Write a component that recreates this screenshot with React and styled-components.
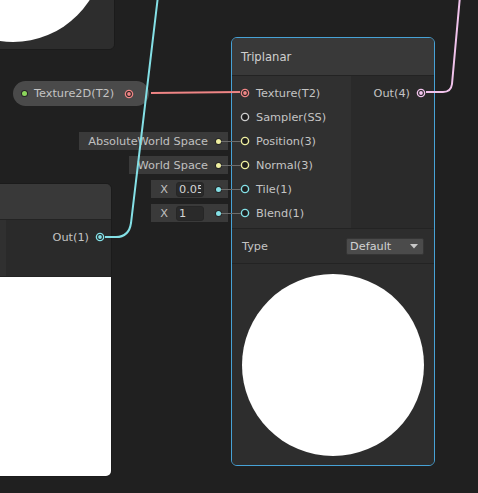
import React from 'react';
import styled, { createGlobalStyle } from 'styled-components';

const colors = {
	canvas: '#202020',
	nodeBody: '#2a2a2a',
	inputCol: '#303030',
	preview: '#2d2d2d',
	header: '#393939',
	divider: '#232323',
	selected: '#47a2d6',
	text: '#c4c4c4',
	texture: '#ef8585',
	vector1: '#84e0e6',
	vector3: '#efefa0',
	vector4: '#f1c3ec',
	sampler: '#cdcdcd',
	property: '#8cd65c',
	field: '#3a3a3a',
	pill: '#4a4a4a',
};

const GlobalStyle = createGlobalStyle`
	html, body {
		margin: 0;
		padding: 0;
		background: ${colors.canvas};
		overflow: hidden;
	}
	body {
		font-family: "DejaVu Sans", "Liberation Sans", sans-serif;
	}
`;

const Canvas = styled.div`
	position: relative;
	width: 478px;
	height: 493px;
	overflow: hidden;
	background: ${colors.canvas};
	font-family: "DejaVu Sans", "Liberation Sans", sans-serif;
	font-size: 11.3px;
	color: ${colors.text};
`;

// graph nodes sit on a free canvas, so their place is the content
const Node = styled.div`
	position: absolute;
	left: ${({ $x }) => $x}px;
	top: ${({ $y }) => $y}px;
	width: ${({ $w }) => $w}px;
	box-sizing: border-box;
	display: flex;
	flex-direction: column;
	background: ${colors.nodeBody};
	border: 1px solid ${({ $selected }) => ($selected ? colors.selected : '#1b1b1b')};
	border-radius: 6px;
`;

const NodeHeader = styled.div`
	height: ${({ $h }) => $h}px;
	display: flex;
	align-items: center;
	padding-left: 9px;
	background: ${colors.header};
	border-bottom: 1px solid ${colors.divider};
	border-radius: 5px 5px 0 0;
	font-size: 11.6px;
	color: #d0d0d0;
`;

const NodeBody = styled.div`
	display: flex;
	align-items: stretch;
	background: ${colors.nodeBody};
`;

const InputColumn = styled.div`
	width: ${({ $w }) => $w}px;
	min-height: ${({ $minH }) => $minH || 0}px;
	box-sizing: border-box;
	padding: 5px 0 3px;
	display: flex;
	flex-direction: column;
	background: ${colors.inputCol};
`;

const OutputColumn = styled.div`
	flex: 1;
	padding: 5px 0 3px;
	display: flex;
	flex-direction: column;
`;

const PortRow = styled.div`
	position: relative;
	height: 24px;
	display: flex;
	align-items: center;
	flex-direction: ${({ $out }) => ($out ? 'row-reverse' : 'row')};
	gap: 6px;
	padding: 0 ${({ $pad }) => $pad || 8}px;
	white-space: nowrap;
`;

const PortIcon = styled.svg`
	flex: none;
	display: block;
`;

const Port = ({ color, filled }) => (
	<PortIcon width="10" height="10" viewBox="0 0 10 10">
		<circle cx="5" cy="5" r="3.6" fill="#1e1e1e" stroke={color} strokeWidth="1.4" />
		{filled && <circle cx="5" cy="5" r="1.9" fill={color} />}
	</PortIcon>
);

const Dot = styled.span`
	flex: none;
	width: 5px;
	height: 5px;
	border-radius: 50%;
	background: ${({ $color }) => $color};
	box-shadow: 0 0 0 1px #262626;
`;

// inline value fields hang off the left side of an input port
const InlineField = styled.div`
	position: absolute;
	right: calc(100% + 4px);
	top: 3px;
	height: 18px;
	display: flex;
	align-items: center;
	gap: 8px;
	padding: 0 7px 0 9px;
	background: ${colors.field};
	color: #c0c0c0;
	white-space: nowrap;

	&::after {
		content: '';
		position: absolute;
		left: calc(100% - 7px);
		top: 9px;
		width: 20px;
		height: 1px;
		background: #6c6c6c;
	}
`;

const ValueBox = styled.span`
	width: 28px;
	height: 15px;
	box-sizing: border-box;
	margin-right: 4px;
	padding: 0 2px;
	display: flex;
	align-items: center;
	background: #2a2a2a;
	border: 1px solid #262626;
	border-radius: 3px;
	color: #d4d4d4;
`;

const ValueText = styled.span`
	flex: 1;
	overflow: hidden;
`;

const TypeRow = styled.div`
	height: 34px;
	display: flex;
	align-items: center;
	justify-content: space-between;
	padding: 0 10px;
	background: ${colors.preview};
	border-top: 1px solid ${colors.divider};
`;

const Dropdown = styled.div`
	width: 78px;
	height: 17px;
	box-sizing: border-box;
	display: flex;
	align-items: center;
	justify-content: space-between;
	padding: 0 5px 0 3px;
	background: #4b4b4b;
	border: 1px solid #353535;
	border-radius: 2px;
	color: #d2d2d2;
`;

const Preview = styled.div`
	height: ${({ $h }) => $h}px;
	display: flex;
	align-items: center;
	justify-content: center;
	overflow: hidden;
	background: ${({ $fill }) => $fill || colors.preview};
	border-top: ${({ $noTop }) => ($noTop ? 'none' : `1px solid ${colors.divider}`)};
	border-radius: 0 0 5px 5px;
`;

const Sphere = styled.div`
	flex: none;
	width: 182px;
	height: 182px;
	border-radius: 50%;
	background: #ffffff;
`;

const PropertyPill = styled.div`
	position: absolute;
	left: 13px;
	top: 81px;
	width: 136px;
	height: 25px;
	box-sizing: border-box;
	display: flex;
	align-items: center;
	gap: 7px;
	padding: 0 15px 0 9px;
	border-radius: 13px;
	background: ${colors.pill};
	white-space: nowrap;

	svg {
		margin-left: auto;
	}
`;

const Wires = styled.svg`
	position: absolute;
	left: 0;
	top: 0;
	pointer-events: none;
`;

const inputs = [
	{ label: 'Texture(T2)', color: colors.texture, filled: true },
	{ label: 'Sampler(SS)', color: colors.sampler },
	{ label: 'Position(3)', color: colors.vector3, field: { text: 'AbsoluteWorld Space' } },
	{ label: 'Normal(3)', color: colors.vector3, field: { text: 'World Space' } },
	{ label: 'Tile(1)', color: colors.vector1, field: { axis: 'X', value: '0.05' } },
	{ label: 'Blend(1)', color: colors.vector1, field: { axis: 'X', value: '1' } },
];

const Field = ({ field, color }) => (
	<InlineField>
		{field.axis ? (
			<>
				<span>{field.axis}</span>
				<ValueBox>
					<ValueText>{field.value}</ValueText>
				</ValueBox>
			</>
		) : (
			<span>{field.text}</span>
		)}
		<Dot $color={color} />
	</InlineField>
);

const App = () => {
	return (
		<Canvas>
			<GlobalStyle />

			<Node $x={-89} $y={-148} $w={204}>
				<Preview $h={196} $noTop>
					<Sphere />
				</Preview>
			</Node>

			<Node $x={-92} $y={183} $w={204}>
				<NodeHeader $h={35} />
				<NodeBody>
					<InputColumn $w={97} $minH={56} />
					<OutputColumn>
						<PortRow $out $pad={6}>
							<Port color={colors.vector1} filled />
							<span>Out(1)</span>
						</PortRow>
					</OutputColumn>
				</NodeBody>
				<Preview $h={199} $fill="#ffffff" />
			</Node>

			<PropertyPill>
				<Dot $color={colors.property} />
				<span>Texture2D(T2)</span>
				<Port color={colors.texture} filled />
			</PropertyPill>

			<Node $x={231} $y={37} $w={204} $selected>
				<NodeHeader $h={37}>Triplanar</NodeHeader>
				<NodeBody>
					<InputColumn $w={119}>
						{inputs.map(input => (
							<PortRow key={input.label}>
								{input.field && <Field field={input.field} color={input.color} />}
								<Port color={input.color} filled={input.filled} />
								<span>{input.label}</span>
							</PortRow>
						))}
					</InputColumn>
					<OutputColumn>
						<PortRow $out>
							<Port color={colors.vector4} filled />
							<span>Out(4)</span>
						</PortRow>
					</OutputColumn>
				</NodeBody>
				<TypeRow>
					<span>Type</span>
					<Dropdown>
						<span>Default</span>
						<svg width="8" height="5" viewBox="0 0 8 5">
							<polygon points="0,0 8,0 4,4.5" fill="#c8c8c8" />
						</svg>
					</Dropdown>
				</TypeRow>
				<Preview $h={201}>
					<Sphere />
				</Preview>
			</Node>

			<Wires width="478" height="493" viewBox="0 0 478 493">
				<path d="M158 -4 L131 223 Q129 237 116 237 L105 237" stroke={colors.vector1} strokeWidth="2" fill="none" />
				<path d="M151 93 L240 92" stroke={colors.texture} strokeWidth="2" fill="none" />
				<path d="M426 92 L443 92 Q451 92 452 84 L460 -4" stroke={colors.vector4} strokeWidth="2" fill="none" />
			</Wires>
		</Canvas>
	);
};

export default App;
